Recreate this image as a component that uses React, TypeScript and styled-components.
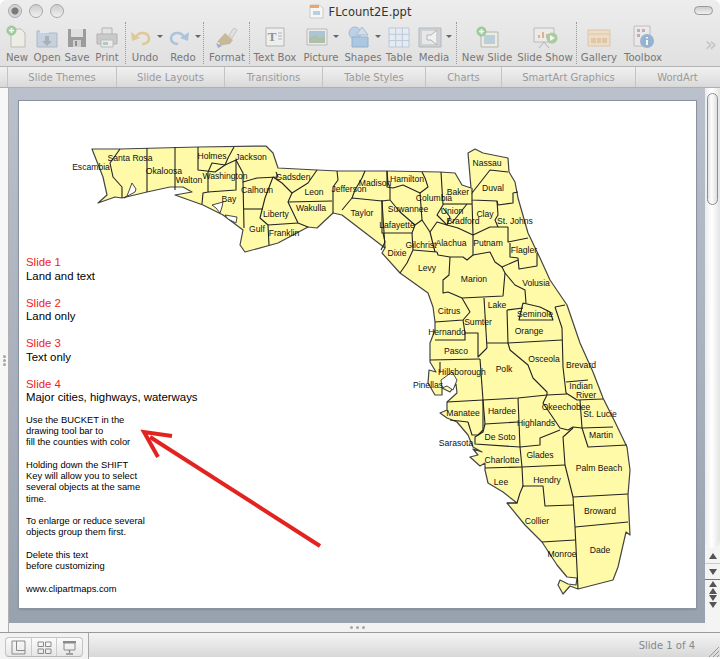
import React from 'react';
import styled, { createGlobalStyle } from 'styled-components';

const Global = createGlobalStyle`
  html, body { margin: 0; padding: 0; background: #fff; }
  #root { width: 720px; height: 659px; overflow: hidden; }
`;

const UI_FONT = '"DejaVu Sans", "Noto Sans", sans-serif';

// ---- map data, in page coordinates
const STATE_OUTLINE = `M92 149 L120 149 L198 147 L266 146 L273 153 L278 168 L317 170 L338 171 L387 171 L440 172 L455 173
  L462 185 L471 188 L468 153 L475 149 L483 153 L508 158 L509 172 L515 182 L518 198 L528 233 L540 258 L550 280 L567 305
  L580 343 L593 372 L603 398 L615 422 L627 447 L630 470 L628 495 L630 535 L626 532 L618 567 L613 580 L578 589 L570 586
  L563 594 L558 585 L560 580 L568 584 L576 585 L577 578 L567 577 L557 565 L542 542 L525 525 L507 503 L517 503 L503 492
  L488 483 L485 470 L485 463 L480 466 L470 457 L478 455 L473 449 L482 452 L473 447 L468 435 L457 422 L447 418 L440 413
  L447 410 L447 402 L457 393 L456 384 L450 392 L442 388 L442 395 L435 395 L428 383 L429 370 L436 372 L430 362 L430 343
  L435 330 L435 322 L433 307 L428 293 L400 273 L382 253 L385 248 L342 215 L333 213 L317 228 L308 227 L278 243 L245 252
  L240 245 L243 230 L223 215 L203 205 L175 195 L192 192 L183 187 L170 187 L147 192 L122 198 L115 197 L98 203
  L107 195 L103 177 Z`;

const COUNTY_LINES = [
  'M120 149 L110 163 L113 177 L122 187 L122 198',
  'M147 148 L147 192',
  'M175 147 L175 190',
  'M198 147 L198 170 L215 172 L225 165 L228 158 L234 147',
  'M225 165 L212 163 L208 172 L208 192 L203 193 L202 204',
  'M225 165 L236 160 L236 190 L208 192',
  'M236 160 L243 173 L243 182 L257 178 L278 177 L276 172',
  'M243 182 L244 228',
  'M244 209 L263 209',
  'M273 177 L265 198 L260 218 L268 225 L269 245',
  'M268 225 L298 223',
  'M273 177 L282 183 L292 193 L288 202 L298 223 L308 227',
  'M317 170 L308 183 L292 193',
  'M288 202 L332 201',
  'M337 171 L338 180 L333 187 L333 213',
  'M342 210 L352 198 L382 201 L385 248',
  'M365 171 L362 178 L355 190 L352 198',
  'M387 171 L388 183 L390 187 L390 200 L382 201',
  'M387 171 L387 187 L393 188 L403 185 L420 193 L428 187 L425 178 L422 172',
  'M390 200 L400 212 L415 225 L422 220 L420 193',
  'M382 200 L382 233 L412 233 L415 225',
  'M383 233 L385 242 L381 250',
  'M412 233 L413 250 L407 263 L400 273',
  'M422 220 L430 232 L437 222 L447 225 L458 228 L473 235 L473 255 L467 260 L463 257 L450 257 L438 255 L437 252 L413 250',
  'M430 232 L435 252',
  'M441 172 L443 205 L437 215 L442 220 L447 225',
  'M443 204 L472 204',
  'M472 188 L472 193 L490 170 L508 172',
  'M472 193 L472 200 L497 201 L498 205 L513 203 L513 193 L518 192',
  'M443 208 L450 217 L447 225',
  'M467 204 L452 223',
  'M472 200 L473 235 L490 227 L508 227',
  'M497 201 L498 215 L495 220 L498 227',
  'M508 227 L508 242 L528 238',
  'M510 243 L510 257 L518 258 L519 269 L537 266 L537 253',
  'M473 255 L490 252 L495 262 L502 267 L518 260',
  'M450 257 L449 275 L443 280 L443 293 L448 292 L462 298 L503 296 L505 273 L502 267',
  'M505 273 L515 285 L525 290 L526 303',
  'M555 307 L562 328 L563 367 L566 393',
  'M523 303 L540 307 L550 312 L553 320 L519 320 L523 303',
  'M507 310 L523 308',
  'M507 310 L508 343 L562 340',
  'M555 307 L565 305',
  'M484 298 L487 348',
  'M487 343 L508 343 L510 350 L528 365 L533 378 L547 392 L547 395',
  'M462 298 L470 312 L463 320 L435 322',
  'M463 320 L465 333 L478 333 L478 357 L487 348',
  'M435 340 L465 340 L465 333',
  'M430 360 L480 359',
  'M480 359 L483 400',
  'M440 362 L440 373',
  'M447 402 L483 400 L518 398 L547 395 L567 394',
  'M566 382 L588 380',
  'M566 393 L577 400 L603 399',
  'M547 395 L543 403 L560 428 L568 430 L573 427 L582 428 L613 427',
  'M580 400 L582 428 L588 447 L627 445',
  'M573 428 L563 437 L565 465 L573 497 L575 527 L578 589',
  'M573 497 L628 494',
  'M575 527 L628 522',
  'M518 398 L520 447 L522 467 L523 487',
  'M483 400 L485 424 L518 422',
  'M485 424 L483 432 L475 437 L475 444 L520 447 L540 445 L540 438 L560 430',
  'M485 468 L522 467 L565 465',
  'M507 503 L517 503 L520 493 L523 486 L543 486 L545 506 L573 505',
  'M542 542 L575 540',
  'M468 422 L472 435 L478 435 L483 430 L483 400',
  'M450 420 L468 422',
];

const WATER = [
  'M127 196 L132 183 L136 189 L135 192 L124 198 Z',
  'M212 205 L223 202 L222 207 L220 213 L216 208 Z',
  'M225 215 L237 217 L236 223 L228 219 Z',
  'M441 380 L452 372 L457 380 L453 390 L447 386 L442 388 Z',
];

const COUNTIES: [string, number, number][] = [
  ['Escambia', 91, 167], ['Santa Rosa', 130, 158], ['Okaloosa', 164, 171], ['Walton', 189, 180], ['Holmes', 212, 156],
  ['Jackson', 251, 157], ['Washington', 225, 176], ['Calhoun', 257, 190], ['Gadsden', 293, 177], ['Leon', 314, 192],
  ['Jefferson', 349, 189], ['Madison', 375, 183], ['Hamilton', 407, 179], ['Bay', 229, 199], ['Liberty', 276, 214],
  ['Wakulla', 311, 208], ['Taylor', 362, 213], ['Gulf', 257, 229], ['Franklin', 284, 233], ['Suwannee', 408, 209],
  ['Lafayette', 397, 225], ['Columbia', 434, 198], ['Baker', 458, 192], ['Union', 452, 211], ['Bradford', 463, 221],
  ['Nassau', 487, 163], ['Duval', 493, 188], ['Clay', 485, 214], ['St. Johns', 515, 221], ['Putnam', 488, 243],
  ['Alachua', 451, 243], ['Gilchrist', 421, 245], ['Dixie', 397, 253], ['Flagler', 524, 250], ['Levy', 427, 268],
  ['Marion', 474, 279], ['Volusia', 536, 283], ['Lake', 497, 305], ['Seminole', 535, 314], ['Orange', 529, 331],
  ['Citrus', 449, 311], ['Sumter', 478, 322], ['Hernando', 447, 332], ['Pasco', 456, 351], ['Osceola', 544, 359],
  ['Brevard', 581, 365], ['Polk', 504, 369], ['Hillsborough', 462, 372], ['Pinellas', 428, 385], ['Indian', 581, 386],
  ['River', 586, 395], ['Manatee', 463, 413], ['Hardee', 502, 411], ['Okeechobee', 566, 407], ['Highlands', 536, 423],
  ['St. Lucie', 600, 414], ['Martin', 601, 435], ['De Soto', 500, 437], ['Sarasota', 456, 443], ['Charlotte', 502, 460],
  ['Glades', 540, 455], ['Palm Beach', 599, 468], ['Lee', 501, 482], ['Hendry', 547, 480], ['Collier', 537, 521],
  ['Broward', 600, 511], ['Monroe', 562, 554], ['Dade', 600, 550],
];

const SLIDE_NOTES = [
  { title: 'Slide 1', text: 'Land and text' },
  { title: 'Slide 2', text: 'Land only' },
  { title: 'Slide 3', text: 'Text only' },
  { title: 'Slide 4', text: 'Major cities, highways, waterways' },
];

const HELP_TEXT = [
  ['Use the BUCKET in the', 'drawing tool bar to', 'fill the counties with color'],
  ['Holding down the SHIFT', 'Key will allow you to select', 'several objects at the same', 'time.'],
  ['To enlarge or reduce several', 'objects group them first.'],
  ['Delete this text', 'before customizing'],
  ['www.clipartmaps.com'],
];

// ---- toolbar icons
const Ico = styled.svg`
  display: block;
  width: 26px;
  height: 26px;
  opacity: 0.66;
`;

const PlusBadge = ({ x, y }: { x: number; y: number }) => (
  <g>
    <circle cx={x} cy={y} r="4.6" fill="#7cc07a" stroke="#5c9e5a" strokeWidth="0.6" />
    <path d={`M${x - 2.6} ${y}h5.2M${x} ${y - 2.6}v5.2`} stroke="#fff" strokeWidth="1.5" />
  </g>
);

const NewIcon = () => (
  <Ico viewBox="0 0 26 26">
    <path d="M7 5h10l4 4v14H7z" fill="#f2f2e6" stroke="#a9a9a0" />
    <PlusBadge x={7.5} y={6.5} />
  </Ico>
);
const OpenIcon = () => (
  <Ico viewBox="0 0 26 26">
    <path d="M3 7h7l2 2h11v14H3z" fill="#b7c8da" stroke="#8fa2b6" />
    <path d="M6 5h9v4H6z" fill="#e4e8ec" />
    <path d="M11 12h4v5h3l-5 5-5-5h3z" fill="#8b95a0" />
  </Ico>
);
const SaveIcon = () => (
  <Ico viewBox="0 0 26 26">
    <path d="M4 5h18v18H4z" fill="#777" />
    <path d="M7 5h12v8H7z" fill="#ddd" />
    <path d="M9 16h8v7H9z" fill="#c6c6c6" />
    <path d="M11 17h2v5h-2z" fill="#666" />
  </Ico>
);
const PrintIcon = () => (
  <Ico viewBox="0 0 26 26">
    <path d="M8 4h10v7H8z" fill="#e2e2e2" stroke="#999" />
    <path d="M3 10h20v10H3z" fill="#bcbcbc" stroke="#999" />
    <path d="M7 16h12v7H7z" fill="#eee" stroke="#a5a5a5" />
    <path d="M9 18h5v3H9z" fill="#8fc0a8" />
  </Ico>
);
const UndoIcon = () => (
  <Ico viewBox="0 0 26 26">
    <path d="M8 13c3-6 12-5 13 1 0 4-3 6-7 6" fill="none" stroke="#d9bc6a" strokeWidth="2.6" />
    <path d="M3 8l1 9 8-3z" fill="#d9bc6a" />
  </Ico>
);
const RedoIcon = () => (
  <Ico viewBox="0 0 26 26">
    <path d="M18 13c-3-6-12-5-13 1 0 4 3 6 7 6" fill="none" stroke="#8db4d6" strokeWidth="2.6" />
    <path d="M23 8l-1 9-8-3z" fill="#8db4d6" />
  </Ico>
);
const FormatIcon = () => (
  <Ico viewBox="0 0 26 26">
    <path d="M15 11l5-7 3 2-5 8z" fill="#ddd" stroke="#999" strokeWidth="0.6" />
    <path d="M11 9l8 7-3 4-12 2 2-3-3-1z" fill="#b9a273" />
    <path d="M2 19l6 3-4 2z" fill="#7f8fd0" />
  </Ico>
);
const TextBoxIcon = () => (
  <Ico viewBox="0 0 26 26">
    <path d="M4 4h18v18H4z" fill="#f4f4f4" stroke="#9b9b9b" />
    <text x="10" y="17" fontFamily="Liberation Serif, serif" fontSize="13" fontWeight="700" textAnchor="middle" fill="#666">T</text>
    <path d="M16 9h4M16 12h4M16 15h4" stroke="#999" />
  </Ico>
);
const PictureIcon = () => (
  <Ico viewBox="0 0 26 26">
    <path d="M3 5h20v16H3z" fill="#eee" stroke="#a5a5a5" />
    <path d="M5 7h16v8H5z" fill="#8fb4cc" />
    <path d="M5 19v-5l6-3 4 3 6-2v7z" fill="#90ad8c" />
  </Ico>
);
const ShapesIcon = () => (
  <Ico viewBox="0 0 26 26">
    <circle cx="9" cy="9" r="6" fill="#a6c6e6" stroke="#7ea2c6" />
    <path d="M6 13h16v10H6z" fill="#8fb8e0" stroke="#6f97bf" />
    <path d="M16 3l6 8H10z" fill="#c9d9ea" stroke="#86a4c2" />
  </Ico>
);
const TableIcon = () => (
  <Ico viewBox="0 0 26 26">
    <path d="M3 4h20v19H3z" fill="#e8eef8" stroke="#a6bad6" />
    <path d="M9.7 4v19M16.3 4v19M3 10.3h20M3 16.6h20" stroke="#a6bad6" />
  </Ico>
);
const MediaIcon = () => (
  <Ico viewBox="0 0 26 26">
    <path d="M2 4h22v19H2z" fill="#c0c8d0" stroke="#a0a0a0" />
    <path d="M5 7h16v13H5z" fill="#eaeaea" />
    <path d="M10 11h4l6-5v15l-6-5h-4z" fill="#f8f8f8" stroke="#999" />
  </Ico>
);
const NewSlideIcon = () => (
  <Ico viewBox="0 0 26 26">
    <path d="M7 8h17v15H7z" fill="#efefe4" stroke="#9d9d95" />
    <path d="M10 11h11v9H10z" fill="#a6c4d4" />
    <PlusBadge x={7.5} y={7.5} />
  </Ico>
);
const SlideShowIcon = () => (
  <Ico viewBox="0 0 26 26">
    <path d="M2 4h20v14H2z" fill="#eee" stroke="#a5a5a5" />
    <path d="M6 14v-3h2v3zM10 14V8h2v6zM14 14v-4h2v4z" fill="#d99a5a" />
    <path d="M12 18l-5 6M12 18l5 6" stroke="#999" />
    <circle cx="20" cy="14" r="5.5" fill="#8ac078" />
    <path d="M18 11l5 3-5 3z" fill="#fff" />
  </Ico>
);
const GalleryIcon = () => (
  <Ico viewBox="0 0 26 26">
    <path d="M2 6h22v16H2z" fill="#f3d9b4" stroke="#d4b68e" />
    <path d="M2 10h22" stroke="#d4b68e" />
    <path d="M5 14h5v5H5zM11 14h4v5h-4zM16 14h5v5h-5z" fill="#dcb98a" />
  </Ico>
);
const ToolboxIcon = () => (
  <Ico viewBox="0 0 26 26">
    <path d="M4 2h16v20H4z" fill="#ececec" stroke="#aaa" />
    <path d="M7 5h3v3H7zM12 5h3v3h-3zM7 10h3v3H7z" fill="#b98e8e" />
    <circle cx="17" cy="17" r="7" fill="#6d9ac8" />
    <path d="M17 13v1.5M17 16v5" stroke="#fff" strokeWidth="2" />
  </Ico>
);

const GROUPS = [
  [
    { label: 'New', w: 30, icon: <NewIcon /> },
    { label: 'Open', w: 30, icon: <OpenIcon /> },
    { label: 'Save', w: 30, icon: <SaveIcon /> },
    { label: 'Print', w: 30, icon: <PrintIcon /> },
  ],
  [
    { label: 'Undo', w: 38, icon: <UndoIcon />, caret: true },
    { label: 'Redo', w: 38, icon: <RedoIcon />, caret: true },
  ],
  [{ label: 'Format', w: 46, icon: <FormatIcon /> }],
  [
    { label: 'Text Box', w: 50, icon: <TextBoxIcon /> },
    { label: 'Picture', w: 42, icon: <PictureIcon />, caret: true },
    { label: 'Shapes', w: 42, icon: <ShapesIcon />, caret: true },
    { label: 'Table', w: 30, icon: <TableIcon /> },
    { label: 'Media', w: 40, icon: <MediaIcon />, caret: true },
  ],
  [
    { label: 'New Slide', w: 60, icon: <NewSlideIcon /> },
    { label: 'Slide Show', w: 56, icon: <SlideShowIcon /> },
  ],
  [
    { label: 'Gallery', w: 44, icon: <GalleryIcon /> },
    { label: 'Toolbox', w: 44, icon: <ToolboxIcon /> },
  ],
];

const GROUP_WIDTHS = [124, 78, 46, 207, 120];

const TABS = [
  { label: 'Slide Themes', w: 109 },
  { label: 'Slide Layouts', w: 108 },
  { label: 'Transitions', w: 98 },
  { label: 'Table Styles', w: 103 },
  { label: 'Charts', w: 76 },
  { label: 'SmartArt Graphics', w: 134 },
  { label: 'WordArt', w: 84 },
];

export default function App() {
  return (
    <Page>
      <Global />
      <Chrome>
        <TitleBar>
          <Lights>
            <Light $active />
            <Light />
            <Light />
          </Lights>
          <DocTitle>
            <svg width="15" height="15" viewBox="0 0 15 15">
              <path d="M1 1h9l4 3v10H1z" fill="#f6f6f6" stroke="#bbb" strokeWidth="0.7" />
              <path d="M1 1h9v3H1z" fill="#e8a868" />
              <path d="M4 7h7v4H4z" fill="#b8cfe0" />
            </svg>
            FLcount2E.ppt
          </DocTitle>
          <ZoomPill />
        </TitleBar>
        <Toolbar>
          {GROUPS.map((group, i) => (
            <ToolGroup key={i} $w={GROUP_WIDTHS[i]} $divider={i < 5}>
              {group.map(item => (
                <ToolItem key={item.label} $w={item.w}>
                  <IconRow>
                    {item.icon}
                    {item.caret && <Caret />}
                  </IconRow>
                  <ToolLabel>{item.label}</ToolLabel>
                </ToolItem>
              ))}
            </ToolGroup>
          ))}
          <MoreTools>»</MoreTools>
        </Toolbar>
        <TabBar>
          {TABS.map(tab => (
            <Tab key={tab.label} $w={tab.w}>{tab.label}</Tab>
          ))}
        </TabBar>
      </Chrome>

      <Workspace>
        <SidePane>
          <GripDots $vertical>
            <i /><i /><i />
          </GripDots>
        </SidePane>
        <EditArea>
          <Stage>
            <Slide>
              <MapDrawing viewBox="19 101 677 507">
                <path d={STATE_OUTLINE} fill="#fffaa8" stroke="#444" strokeWidth="1.2" strokeLinejoin="round" />
                {WATER.map(d => (
                  <path key={d} d={d} fill="#fff" stroke="#333" strokeWidth="0.9" />
                ))}
                {COUNTY_LINES.map(d => (
                  <path key={d} d={d} fill="none" stroke="#222" strokeWidth="1.1" strokeLinejoin="round" />
                ))}
                {COUNTIES.map(([name, x, y]) => (
                  <CountyName key={name} x={x} y={y + 3}>{name}</CountyName>
                ))}
                <path d="M320 546 L150 437" stroke="#e3231f" strokeWidth="4" fill="none" />
                <path d="M172 436 L144 432 L158 457" stroke="#e3231f" strokeWidth="4" fill="none" />
              </MapDrawing>
              <SlideText>
                {SLIDE_NOTES.map(note => (
                  <NoteBlock key={note.title}>
                    <NoteTitle>{note.title}</NoteTitle>
                    <NoteBody>{note.text}</NoteBody>
                  </NoteBlock>
                ))}
                <HelpText>
                  {HELP_TEXT.map((para, i) => (
                    <HelpPara key={i}>
                      {para.map(line => <div key={line}>{line}</div>)}
                    </HelpPara>
                  ))}
                </HelpText>
              </SlideText>
            </Slide>
          </Stage>
          <Splitter>
            <GripDots>
              <i /><i /><i />
            </GripDots>
          </Splitter>
        </EditArea>
        <ScrollBar>
          <ScrollTrack>
            <ScrollThumb />
          </ScrollTrack>
          <ScrollBtn $line="#ccc"><Arrow $up /></ScrollBtn>
          <ScrollBtn $line="#777"><Arrow /></ScrollBtn>
          <PageBtn><Arrow $up /><Arrow $up /></PageBtn>
          <PageBtn><Arrow /><Arrow /></PageBtn>
          <ScrollFill />
        </ScrollBar>
      </Workspace>

      <StatusBar>
        <ViewSwitch>
          <ViewCell>
            <svg width="15" height="15" viewBox="0 0 15 15">
              <path d="M1 1h13v13H1zM5.5 1v9.5H14" fill="none" stroke="#8a8a8a" />
            </svg>
          </ViewCell>
          <ViewCell $mid>
            <svg width="15" height="15" viewBox="0 0 15 15">
              <path d="M1 2h5.5v4.5H1zM8.5 2H14v4.5H8.5zM1 9h5.5v4.5H1zM8.5 9H14v4.5H8.5z" fill="none" stroke="#8a8a8a" />
            </svg>
          </ViewCell>
          <ViewCell>
            <svg width="15" height="15" viewBox="0 0 15 15">
              <path d="M1 1h13v2H1z" fill="#8a8a8a" />
              <path d="M2 3h11v7H2z" fill="none" stroke="#8a8a8a" />
              <path d="M7.5 10v3M4 14h7" stroke="#8a8a8a" strokeWidth="1.3" />
            </svg>
          </ViewCell>
        </ViewSwitch>
        <StatusMain>
          <SlideCount>Slide 1 of 4</SlideCount>
          <ResizeGrip width="11" height="11" viewBox="0 0 11 11">
            <path d="M1 11L11 1M5 11l6-6M9 11l2-2" stroke="#999" />
          </ResizeGrip>
        </StatusMain>
      </StatusBar>
    </Page>
  );
}

const Page = styled.div`
  width: 720px;
  height: 659px;
  display: flex;
  flex-direction: column;
  font-family: ${UI_FONT};
  background: #fff;
`
const Chrome = styled.header`
  flex: none;
  background: linear-gradient(#ededed, #dcdcdc);
  border-radius: 6px 6px 0 0;
`
const TitleBar = styled.div`
  height: 22px;
  display: flex;
  align-items: center;
  justify-content: center;
  position: relative;
`
const Lights = styled.div`
  position: absolute;
  left: 8px;
  top: 4px;
  display: flex;
  gap: 7px;
`
const Light = styled.div<{ $active?: boolean }>`
  width: 12px;
  height: 12px;
  border-radius: 50%;
  border: 1px solid #a8a8a8;
  background: ${props => props.$active
    ? 'radial-gradient(circle, #7a7a7a 0 3px, #cfcfcf 4px, #e8e8e8 100%)'
    : 'linear-gradient(#cdcdcd, #efefef)'};
`
const DocTitle = styled.div`
  display: flex;
  align-items: center;
  gap: 5px;
  margin-top: 1px;
  font-size: 11.5px;
  color: #333;
`
const ZoomPill = styled.div`
  position: absolute;
  right: 7px;
  top: 6px;
  width: 17px;
  height: 7px;
  border: 1px solid #999;
  border-radius: 5px;
  background: linear-gradient(#ccc, #f0f0f0);
`
const Toolbar = styled.div`
  height: 44px;
  display: flex;
  padding-left: 2px;
  position: relative;
`
const ToolGroup = styled.div<{ $w: number; $divider: boolean }>`
  display: flex;
  width: ${props => props.$w}px;
  flex: none;
  box-sizing: border-box;
  border-right: ${props => props.$divider ? '1px dotted #9a9a9a' : 'none'};
  height: 42px;
`
const ToolItem = styled.div<{ $w: number }>`
  width: ${props => props.$w}px;
  flex: none;
  display: flex;
  flex-direction: column;
  align-items: center;
`
const IconRow = styled.div`
  height: 30px;
  display: flex;
  align-items: center;
  gap: 3px;
`
const Caret = styled.div`
  width: 0;
  height: 0;
  border-left: 3px solid transparent;
  border-right: 3px solid transparent;
  border-top: 3px solid #666;
`
const ToolLabel = styled.div`
  margin-top: 1px;
  font-size: 10.2px;
  line-height: 12px;
  color: #777;
  white-space: nowrap;
`
const MoreTools = styled.div`
  position: absolute;
  right: 3px;
  top: 10px;
  font-size: 20px;
  color: #c4c4c4;
`
const TabBar = styled.div`
  height: 22px;
  display: flex;
  border-top: 1px solid #b4b4b4;
  border-bottom: 1px solid #b0b0b0;
  background: linear-gradient(#f0f0f0, #e6e6e6 50%, #d9d9d9);
  box-sizing: border-box;
  padding-left: 7px;
`
const Tab = styled.div<{ $w: number }>`
  width: ${props => props.$w}px;
  flex: none;
  box-sizing: border-box;
  border-left: 1px solid #c4c4c4;
  text-align: center;
  font-size: 10px;
  line-height: 21px;
  color: #9a9a9a;
  white-space: nowrap;
`
const Workspace = styled.main`
  height: 544px;
  flex: none;
  display: flex;
  border-bottom: 1px solid #9a9a9a;
`
const SidePane = styled.aside`
  width: 9px;
  flex: none;
  display: flex;
  align-items: center;
  justify-content: center;
  box-sizing: border-box;
  border-right: 1px solid #b0b0b0;
  background: #f7f7f7;
`
const GripDots = styled.div<{ $vertical?: boolean }>`
  display: flex;
  flex-direction: ${props => props.$vertical ? 'column' : 'row'};
  gap: ${props => props.$vertical ? '1px' : '3px'};
  i {
    display: block;
    width: 3px;
    height: 3px;
    border-radius: 50%;
    background: #a6a6a6;
  }
`
const EditArea = styled.div`
  flex: 1;
  min-width: 0;
  display: flex;
  flex-direction: column;
`
const Stage = styled.div`
  flex: 1;
  min-height: 0;
  padding: 13px 9px 15px 10px;
  background: linear-gradient(#bac1cd, #98a2ae);
  display: flex;
`
const Slide = styled.div`
  flex: 1;
  position: relative;
  background: #fff;
  box-shadow: 0 0 0 1px #8b93a0, 0 1px 2px rgba(60, 60, 60, 0.5);
`
const MapDrawing = styled.svg`
  position: absolute;
  inset: 0;
  width: 100%;
  height: 100%;
`
const CountyName = styled.text`
  font-family: "Liberation Sans", Arial, sans-serif;
  font-size: 8.6px;
  fill: #111;
  text-anchor: middle;
`
const SlideText = styled.div`
  position: relative;
  padding: 155px 0 0 7px;
  font-family: "Liberation Sans", Arial, sans-serif;
  color: #000;
`
const NoteBlock = styled.div`
  margin-bottom: 13.5px;
  font-size: 11.4px;
  line-height: 13.5px;
`
const NoteTitle = styled.div`
  color: #ee1c1c;
`
const NoteBody = styled.div`
  color: #000;
`
const HelpText = styled.div`
  margin-top: -4.5px;
  font-size: 9.4px;
  line-height: 11.3px;
`
const HelpPara = styled.div`
  margin-bottom: 11.3px;
`
const Splitter = styled.div`
  height: 9px;
  flex: none;
  display: flex;
  align-items: center;
  justify-content: center;
  background: #f2f2f2;
`
const ScrollBar = styled.div`
  width: 15px;
  flex: none;
  display: flex;
  flex-direction: column;
  background: #f4f4f4;
`
const ScrollTrack = styled.div`
  height: 460px;
  flex: none;
  box-sizing: border-box;
  padding: 5px 2px 0;
  border-radius: 0 0 8px 8px;
  background: linear-gradient(90deg, #ececec, #fff 45%, #e4e4e4);
`
const ScrollThumb = styled.div`
  height: 112px;
  box-sizing: border-box;
  border: 1px solid #8f8f8f;
  border-radius: 6px;
  background: linear-gradient(90deg, #e2e2e2, #fdfdfd 40%, #dedede);
`
const Arrow = styled.div<{ $up?: boolean }>`
  width: 0;
  height: 0;
  border-left: 4px solid transparent;
  border-right: 4px solid transparent;
  border-${props => props.$up ? 'bottom' : 'top'}: 6px solid #555;
`
const ScrollBtn = styled.div<{ $line: string }>`
  height: 16px;
  flex: none;
  box-sizing: border-box;
  display: flex;
  align-items: center;
  justify-content: center;
  border-bottom: 1px solid ${props => props.$line};
`
const PageBtn = styled.div`
  height: 14px;
  flex: none;
  display: flex;
  flex-direction: column;
  align-items: center;
  justify-content: center;
  gap: 1px;
`
const ScrollFill = styled.div`
  flex: 1;
`
const StatusBar = styled.footer`
  flex: 1;
  display: flex;
  background: #fff;
`
const ViewSwitch = styled.div`
  width: 89px;
  flex: none;
  box-sizing: border-box;
  padding: 4px 5px 2px;
  display: flex;
  border-right: 1px solid #a8a8a8;
  background: #f2f2f2;
`
const ViewCell = styled.div<{ $mid?: boolean }>`
  flex: 1;
  display: flex;
  align-items: center;
  justify-content: center;
  background: linear-gradient(#fbfbfb, #e6e6e6);
  border-top: 1px solid #c4c4c4;
  border-bottom: 1px solid #b8b8b8;
  border-left: ${props => props.$mid ? '1px solid #ccc' : 'none'};
  border-right: ${props => props.$mid ? '1px solid #ccc' : 'none'};
  &:first-child { border-left: 1px solid #c4c4c4; border-radius: 4px 0 0 4px; }
  &:last-child { border-right: 1px solid #c4c4c4; border-radius: 0 4px 4px 0; }
`
const StatusMain = styled.div`
  flex: 1;
  height: 24px;
  display: flex;
  align-items: center;
  justify-content: flex-end;
  padding-right: 25px;
  position: relative;
  background: linear-gradient(#f4f4f4, #d8d8d8);
`
const SlideCount = styled.div`
  font-size: 10px;
  color: #888;
`
const ResizeGrip = styled.svg`
  position: absolute;
  right: 1px;
  bottom: 0;
`
